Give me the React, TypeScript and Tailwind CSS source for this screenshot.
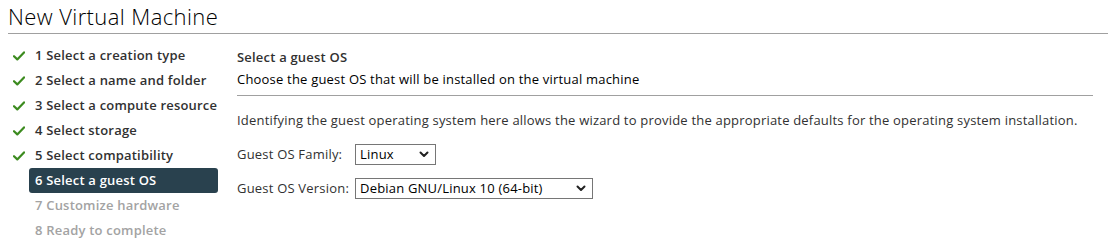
import React from 'react';

const steps = [
  { n: 1, label: 'Select a creation type', state: 'done' },
  { n: 2, label: 'Select a name and folder', state: 'done' },
  { n: 3, label: 'Select a compute resource', state: 'done' },
  { n: 4, label: 'Select storage', state: 'done' },
  { n: 5, label: 'Select compatibility', state: 'done' },
  { n: 6, label: 'Select a guest OS', state: 'active' },
  { n: 7, label: 'Customize hardware', state: 'todo' },
  { n: 8, label: 'Ready to complete', state: 'todo' },
];

function Check() {
  return (
    <svg width="12" height="10" viewBox="0 0 12 10" className="shrink-0">
      <path d="M1 5.2 L4.3 8.4 L11 1.4" fill="none" stroke="#3c8b1f" strokeWidth="2.2" strokeLinecap="round" strokeLinejoin="round" />
    </svg>
  );
}

function Chevron() {
  return (
    <svg width="10" height="7" viewBox="0 0 10 7">
      <path d="M1.5 1.5 L5 5 L8.5 1.5" fill="none" stroke="#222" strokeWidth="2" strokeLinecap="round" strokeLinejoin="round" />
    </svg>
  );
}

function FakeSelect({ value, width }: { value: string; width: string }) {
  return (
    <div className={`flex shrink-0 items-center justify-between h-[21px] border border-[#767676] bg-white pl-[4px] pr-[6px] text-[13px] text-black ${width}`}>
      <span>{value}</span>
      <Chevron />
    </div>
  );
}

export default function App() {
  return (
    <div className="w-[1120px] h-[251px] bg-white text-[#313131] font-['Open_Sans',sans-serif] tracking-[0.2px] overflow-hidden">
      <div className="px-2 pt-[2px]">
        <h1 className="text-[22px] font-light leading-[28px] tracking-[0.4px] text-black">New Virtual Machine</h1>
        <div className="mt-[3px] mr-[4px] h-px bg-[#a0a0a0]" />
      </div>
      <div className="flex items-start">
        <ul className="w-[218px] shrink-0 pl-[29px] pt-[9px] flex flex-col">
          {steps.map((s) => (
            <li
              key={s.n}
              className={
                'relative h-[25px] flex items-center pl-[6px] text-[13px] font-semibold rounded-[3px] ' +
                (s.state === 'active' ? 'bg-[#29414e] text-white' : s.state === 'todo' ? 'text-[#a3a3a3]' : 'text-[#313131]')
              }
            >
              {s.state === 'done' && (
                <span className="absolute left-[-16px] top-[8px]"><Check /></span>
              )}
              {s.n} {s.label}
            </li>
          ))}
        </ul>
        <div className="flex-1 pl-[19px] pr-[27px] pt-[12px] text-[13px]">
          <div className="font-semibold leading-[20px] pt-px">Select a guest OS</div>
          <div className="leading-[20px] mt-[2px] text-black">Choose the guest OS that will be installed on the virtual machine</div>
          <div className="mt-[6px] h-px bg-[#a0a0a0]" />
          <p className="mt-[14px] leading-[20px]">Identifying the guest operating system here allows the wizard to provide the appropriate defaults for the operating system installation.</p>
          <div className="mt-[14px] flex items-center gap-[9px]">
            <span className="w-[109px] shrink-0 whitespace-nowrap">Guest OS Family:</span>
            <FakeSelect value="Linux" width="w-[81px]" />
          </div>
          <div className="mt-[13px] flex items-center gap-[9px]">
            <span className="w-[109px] shrink-0 whitespace-nowrap">Guest OS Version:</span>
            <FakeSelect value="Debian GNU/Linux 10 (64-bit)" width="w-[238px]" />
          </div>
        </div>
      </div>
    </div>
  );
}
